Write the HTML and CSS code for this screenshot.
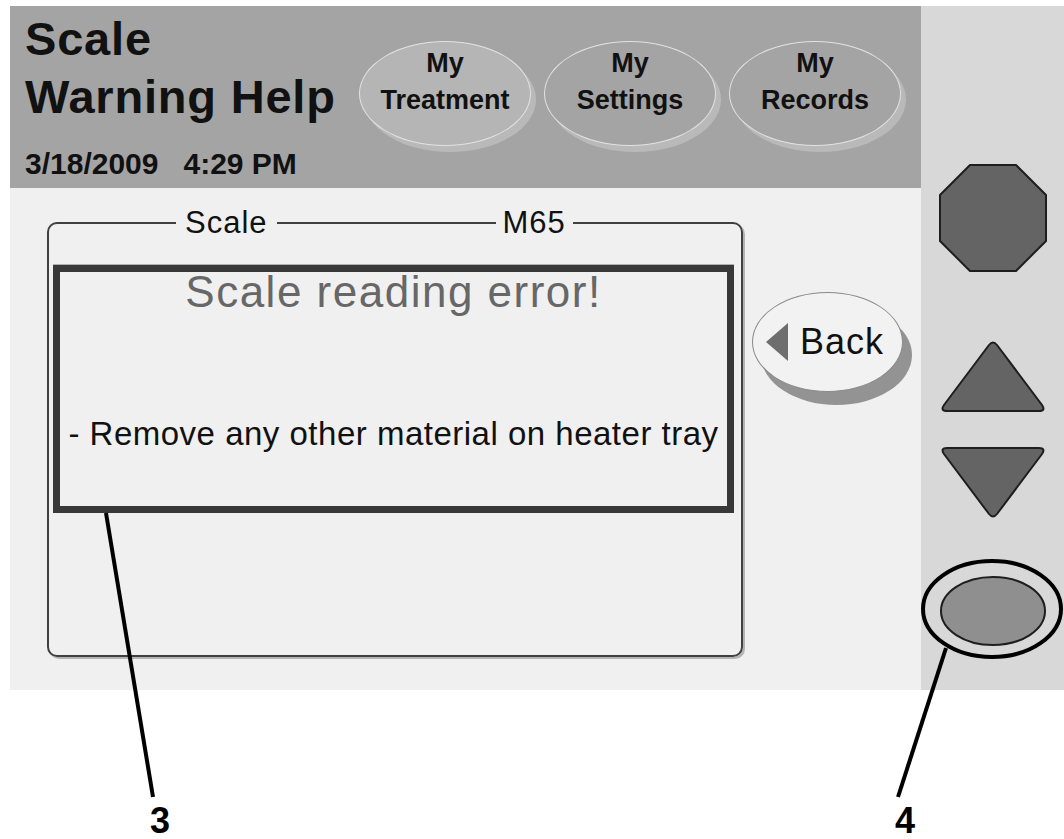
FILE: index.html
```html
<!DOCTYPE html>
<html lang="en">
<head>
    <meta charset="UTF-8">
    <meta name="viewport" content="width=device-width, initial-scale=1.0">
    <title>Scale Warning Help</title>
    <link rel="stylesheet" href="styles.css">
</head>
<body>

<div class="page">
    <div class="device">
        <div class="screen">
            <div class="header">
                <div class="title-block">
                    <h1 class="title">Scale<br>Warning Help</h1>
                    <div class="datetime">3/18/2009&nbsp;&nbsp;&nbsp;4:29 PM</div>
                </div>
                <div class="nav">
                    <a class="nav-btn active" href="#">My<br>Treatment</a>
                    <a class="nav-btn" href="#">My<br>Settings</a>
                    <a class="nav-btn" href="#">My<br>Records</a>
                </div>
            </div>

            <div class="main">
                <fieldset class="panel">
                    <legend class="panel-title">
                        <span>Scale</span>
                        <span class="rule"></span>
                        <span>M65</span>
                    </legend>
                    <div class="message">
                        <p class="msg-title">Scale reading error!</p>
                        <p class="msg-text">- Remove any other material on heater tray</p>
                    </div>
                </fieldset>

                <button class="back-btn">
                    <svg width="22" height="38" viewBox="0 0 22 38">
                        <polygon points="22,0 22,38 0,19" fill="#6e6e6e"/>
                    </svg>
                    <span>Back</span>
                </button>
            </div>
        </div>

        <!-- tombol fisik di sisi kanan -->
        <div class="side">
            <svg class="key key-stop" width="108" height="108" viewBox="0 0 108 108">
                <polygon points="31,1 77,1 107,31 107,77 77,107 31,107 1,77 1,31" fill="#646464" stroke="#1e1e1e" stroke-width="2" stroke-linejoin="round"/>
            </svg>
            <svg class="key key-up" width="108" height="74" viewBox="0 0 108 74">
                <path d="M58 6 L103 66 Q107 72 100 72 L8 72 Q1 72 5 66 L50 6 Q54 1 58 6 Z" fill="#646464" stroke="#1e1e1e" stroke-width="2"/>
            </svg>
            <svg class="key key-down" width="108" height="74" viewBox="0 0 108 74">
                <path d="M58 68 L103 8 Q107 2 100 2 L8 2 Q1 2 5 8 L50 68 Q54 73 58 68 Z" fill="#646464" stroke="#1e1e1e" stroke-width="2"/>
            </svg>
            <svg class="key key-enter" width="108" height="72" viewBox="0 0 108 72">
                <ellipse cx="54" cy="36" rx="52" ry="34" fill="#8f8f8f" stroke="#1e1e1e" stroke-width="2"/>
            </svg>
        </div>
    </div>

    <!-- nomor penunjuk di bawah layar -->
    <div class="labels">
        <span class="callout-num num-3">3</span>
        <span class="callout-num num-4">4</span>
    </div>

    <!-- garis penunjuk (callout) di atas gambar -->
    <svg class="callouts" width="1064" height="839" viewBox="0 0 1064 839">
        <line x1="106" y1="513" x2="153" y2="797" stroke="#000" stroke-width="4"/>
        <ellipse cx="992" cy="609" rx="69" ry="48" fill="none" stroke="#000" stroke-width="4"/>
        <line x1="946" y1="648" x2="898" y2="797" stroke="#000" stroke-width="4"/>
    </svg>
</div>

</body>
</html>
```

FILE: styles.css
```css
/* Layar bantuan peringatan timbangan */
body {
    font-family: "Liberation Sans", Arial, sans-serif;
    margin: 0;
    padding: 0;
    background: #fff;
    color: #111;
}

.page {
    position: relative;
    width: 1064px;
    height: 839px;
    padding-top: 6px;
    box-sizing: border-box;
}

.device {
    display: flex;
    width: 1054px;
    height: 684px;
    margin-left: 10px;
}

.screen {
    width: 911px;
    display: flex;
    flex-direction: column;
}

/* Header abu-abu */
.header {
    height: 182px;
    background-color: #a4a4a4;
    display: flex;
}

.title-block {
    width: 334px;
    padding-left: 15px;
}

.title {
    margin: 0;
    padding-top: 4px;
    font-size: 47px;
    line-height: 58px;
    font-weight: bold;
    letter-spacing: 0.8px;
}

.datetime {
    margin-top: 20px;
    font-size: 30px;
    line-height: 36px;
    font-weight: bold;
}

.nav {
    display: flex;
    gap: 13px;
    padding-top: 35px;
}

.nav-btn {
    box-sizing: border-box;
    width: 172px;
    height: 105px;
    padding-top: 3px;
    border-radius: 50%;
    border: 1px solid #e2e2e2;
    background-color: #a4a4a4;
    box-shadow: 5px 6px 0 #b9b9b9;
    color: #111;
    text-decoration: none;
    text-align: center;
    font-size: 27px;
    line-height: 37px;
    font-weight: bold;
}

.nav-btn.active {
    background-color: #b5b5b5;
}

/* Area isi */
.main {
    flex: 1;
    background-color: #f0f0f0;
    display: flex;
    align-items: flex-start;
    padding: 20px 0 0 37px;
}

.panel {
    box-sizing: border-box;
    width: 696px;
    height: 449px;
    margin: 0;
    padding: 0;
    border: 2px solid #404040;
    border-radius: 10px;
    box-shadow: 2px 2px 0 #b4b4b4;
    min-inline-size: 0;
}

.panel-title {
    display: flex;
    align-items: center;
    margin-left: 127px;
    padding: 0 7px 0 9px;
    font-size: 31px;
    line-height: 30px;
    letter-spacing: 1px;
}

.panel-title .rule {
    width: 219px;
    height: 2px;
    margin: 0 7px 0 9px;
    background-color: #404040;
}

.message {
    box-sizing: border-box;
    width: 681px;
    height: 248px;
    margin: 27px 0 0 4px;
    border: 7px solid #383838;
    box-shadow: 0 -1px 0 #b0b0b0;
    text-align: center;
    white-space: nowrap;
}

.msg-title {
    margin: 0;
    font-size: 44px;
    line-height: 40px;
    letter-spacing: 1.5px;
    color: #676767;
}

.msg-text {
    margin: 102px 0 0 0;
    font-size: 33px;
    line-height: 40px;
    letter-spacing: 0.5px;
}

.back-btn {
    box-sizing: border-box;
    width: 151px;
    height: 100px;
    margin: 84px 0 0 9px;
    padding: 0 0 0 13px;
    display: flex;
    align-items: center;
    gap: 12px;
    border: 1px solid #8a8a8a;
    border-radius: 50%;
    background-color: #f2f2f2;
    box-shadow: 9px 13px 0 #939393;
    font-family: inherit;
    font-size: 36px;
    letter-spacing: 1px;
    color: #111;
    cursor: pointer;
}

.back-btn svg {
    display: block;
}

/* Panel tombol kanan */
.side {
    width: 143px;
    background-color: #d8d8d8;
    display: flex;
    flex-direction: column;
    align-items: center;
    padding-top: 158px;
    box-sizing: border-box;
}

.key {
    display: block;
}

.key-up {
    margin-top: 67px;
}

.key-down {
    margin-top: 33px;
}

.key-enter {
    margin-top: 55px;
}

/* Nomor penunjuk */
.labels {
    display: flex;
    padding: 114px 0 0 150px;
    height: 34px;
}

.callout-num {
    font-size: 36px;
    line-height: 34px;
    font-weight: bold;
    color: #000;
}

.num-4 {
    margin-left: 725px;
}

.callouts {
    position: absolute;
    top: 0;
    left: 0;
    pointer-events: none;
}
```
